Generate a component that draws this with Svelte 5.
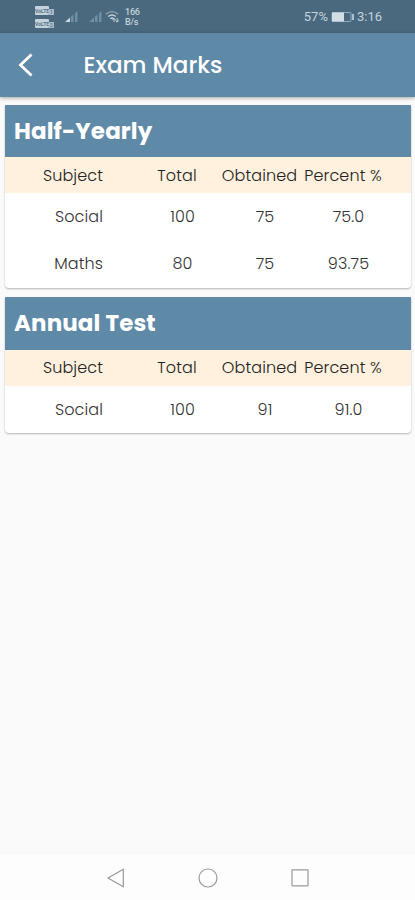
<script lang="ts">
	type Mark = { subject: string; total: string; obtained: string; percent: string };
	type Exam = { name: string; marks: Mark[] };

	const exams: Exam[] = [
		{
			name: 'Half-Yearly',
			marks: [
				{ subject: 'Social', total: '100', obtained: '75', percent: '75.0' },
				{ subject: 'Maths', total: '80', obtained: '75', percent: '93.75' }
			]
		},
		{
			name: 'Annual Test',
			marks: [{ subject: 'Social', total: '100', obtained: '91', percent: '91.0' }]
		}
	];
</script>

<div class="screen">
	<div class="status">
		<div class="volte">
			<span><b>VoLTE</b><i>1</i></span>
			<span><b>VoLTE</b><i>2</i></span>
		</div>
		<svg class="signal" width="14" height="13" viewBox="0 0 14 13">
			<path d="M0 12 5 7.5V12z" fill="#c9d8e1" />
			<path d="M6 6.5 8.5 4.5V12H6zM10 3.2 12.5 1V12H10z" fill="#6f8fa5" />
		</svg>
		<svg class="signal" width="14" height="13" viewBox="0 0 14 13">
			<path d="M0 12 5 7.5V12zM6 6.5 8.5 4.5V12H6zM10 3.2 12.5 1V12H10z" fill="#6f8fa5" />
		</svg>
		<svg class="wifi" width="15" height="13" viewBox="0 0 15 13" fill="none">
			<path d="M1 4.2Q7 -1 13 4.2" stroke="#8da7b8" stroke-width="1.3" />
			<path d="M3.2 6.5Q7 3.3 10.8 6.5M5.3 8.7Q7 7.2 8.7 8.7" stroke="#c2d1db" stroke-width="1.4" />
			<path d="M9 12V8.5M7.5 10 9 8.3l1.5 1.7M12.2 8v4M10.7 10.5l1.5 1.7 1.5-1.7" stroke="#c2d1db" />
		</svg>
		<div class="speed"><span>166</span><span>B/s</span></div>
		<span class="charge">57%</span>
		<svg class="battery" width="24" height="12" viewBox="0 0 24 12" fill="none">
			<rect x="1" y="1.5" width="19" height="9" rx="1" stroke="#8ea9ba" />
			<rect x="1" y="1.5" width="12" height="9" fill="#d3dee5" />
			<path d="M22 3v6" stroke="#adc1ce" stroke-width="2" />
		</svg>
		<span class="time">3:16</span>
	</div>

	<header>
		<svg width="18" height="26" viewBox="0 0 18 26" fill="none">
			<path d="M15.5 2.5 4.5 13 15.5 23.5" stroke="#fff" stroke-width="2.8" />
		</svg>
		<h1>Exam Marks</h1>
	</header>

	<main>
		{#each exams as exam}
			<section>
				<h2>{exam.name}</h2>
				<div class="row head">
					<span>Subject</span>
					<span>Total</span>
					<span>Obtained</span>
					<span>Percent %</span>
				</div>
				{#each exam.marks as mark}
					<div class="row mark">
						<span>{mark.subject}</span>
						<span>{mark.total}</span>
						<span>{mark.obtained}</span>
						<span>{mark.percent}</span>
					</div>
				{/each}
			</section>
		{/each}
	</main>

	<nav>
		<svg width="20" height="22" viewBox="0 0 20 22">
			<path d="M2 11 17.3 2.3V19.7z" />
		</svg>
		<svg width="22" height="22" viewBox="0 0 22 22">
			<circle cx="11" cy="11" r="9" />
		</svg>
		<svg width="20" height="22" viewBox="0 0 20 22">
			<rect x="2" y="2.8" width="16" height="16" rx="0.5" />
		</svg>
	</nav>
</div>

<style>
	:global(body) {
		margin: 0;
	}

	.screen {
		display: flex;
		flex-direction: column;
		width: 415px;
		height: 900px;
		background: #fafafa;
		font-family: Poppins, Inter, sans-serif;
		overflow: hidden;
	}

	.status {
		display: flex;
		align-items: center;
		height: 33px;
		flex: none;
		box-sizing: border-box;
		padding: 0 33px 0 35px;
		background: #4a697f;
		color: #c3d2dc;
		font-family: Roboto, sans-serif;
	}

	.volte {
		display: flex;
		flex-direction: column;
		gap: 3px;
		width: 20px;
	}

	.volte span {
		display: flex;
		align-items: flex-end;
		height: 10px;
	}

	.volte b {
		width: 14px;
		height: 9px;
		background: #c3d2dc;
		color: #557287;
		font-size: 5px;
		line-height: 10px;
		text-align: center;
		border-radius: 1px;
	}

	.volte i {
		width: 5px;
		height: 6px;
		background: #a6bac7;
		color: #557287;
		font-size: 5px;
		font-style: normal;
		line-height: 6px;
		text-align: center;
	}

	.signal {
		margin-left: 10px;
	}

	.wifi {
		margin-left: 2px;
	}

	.speed {
		display: flex;
		flex-direction: column;
		margin-left: 5px;
		font-size: 9px;
		font-weight: 500;
		line-height: 10px;
		letter-spacing: -0.2px;
	}

	.charge {
		margin-left: auto;
		font-size: 13px;
	}

	.battery {
		margin: 0 2px 0 3px;
	}

	.time {
		font-size: 13px;
	}

	header {
		display: flex;
		align-items: center;
		flex: none;
		height: 64px;
		padding-left: 16px;
		background: #5f8aa7;
		box-shadow: 0 1px 4px rgba(0, 0, 0, 0.35);
		color: #fff;
	}

	h1 {
		margin: 0 0 0 49.5px;
		font-size: 23px;
		font-weight: 500;
		white-space: nowrap;
	}

	main {
		display: flex;
		flex: 1;
		flex-direction: column;
		gap: 9.5px;
		padding: 7.5px 4px 0 5px;
	}

	section {
		background: #fff;
		border-radius: 1px 1px 4px 4px;
		box-shadow: 0 1px 2px rgba(0, 0, 0, 0.28);
		overflow: hidden;
	}

	h2 {
		display: flex;
		align-items: center;
		height: 52.5px;
		margin: 0;
		padding-left: 9px;
		background: #5f8aa7;
		color: #fff;
		font-size: 23px;
		font-weight: 700;
		letter-spacing: 0.1px;
	}

	.row {
		display: grid;
		grid-template-columns: 131px 82px 83px 84px;
		align-items: center;
		font-size: 16px;
		font-weight: 300;
		letter-spacing: 0.12px;
		text-align: center;
		white-space: nowrap;
	}

	.row span:first-child {
		padding-right: 33px;
		text-align: right;
	}

	.head {
		height: 36px;
		background: #fff1de;
		color: #222;
	}

	.mark {
		height: 47.3px;
		color: #333;
	}

	/* values sit slightly right of their column titles */
	.mark span:not(:first-child) {
		padding-left: 11px;
	}

	nav {
		display: flex;
		align-items: center;
		justify-content: space-between;
		flex: none;
		height: 45px;
		padding: 0 105px 0 106px;
		background: #fdfdfd;
	}

	nav svg {
		fill: none;
		stroke: #999;
		stroke-width: 1.2;
	}
</style>
